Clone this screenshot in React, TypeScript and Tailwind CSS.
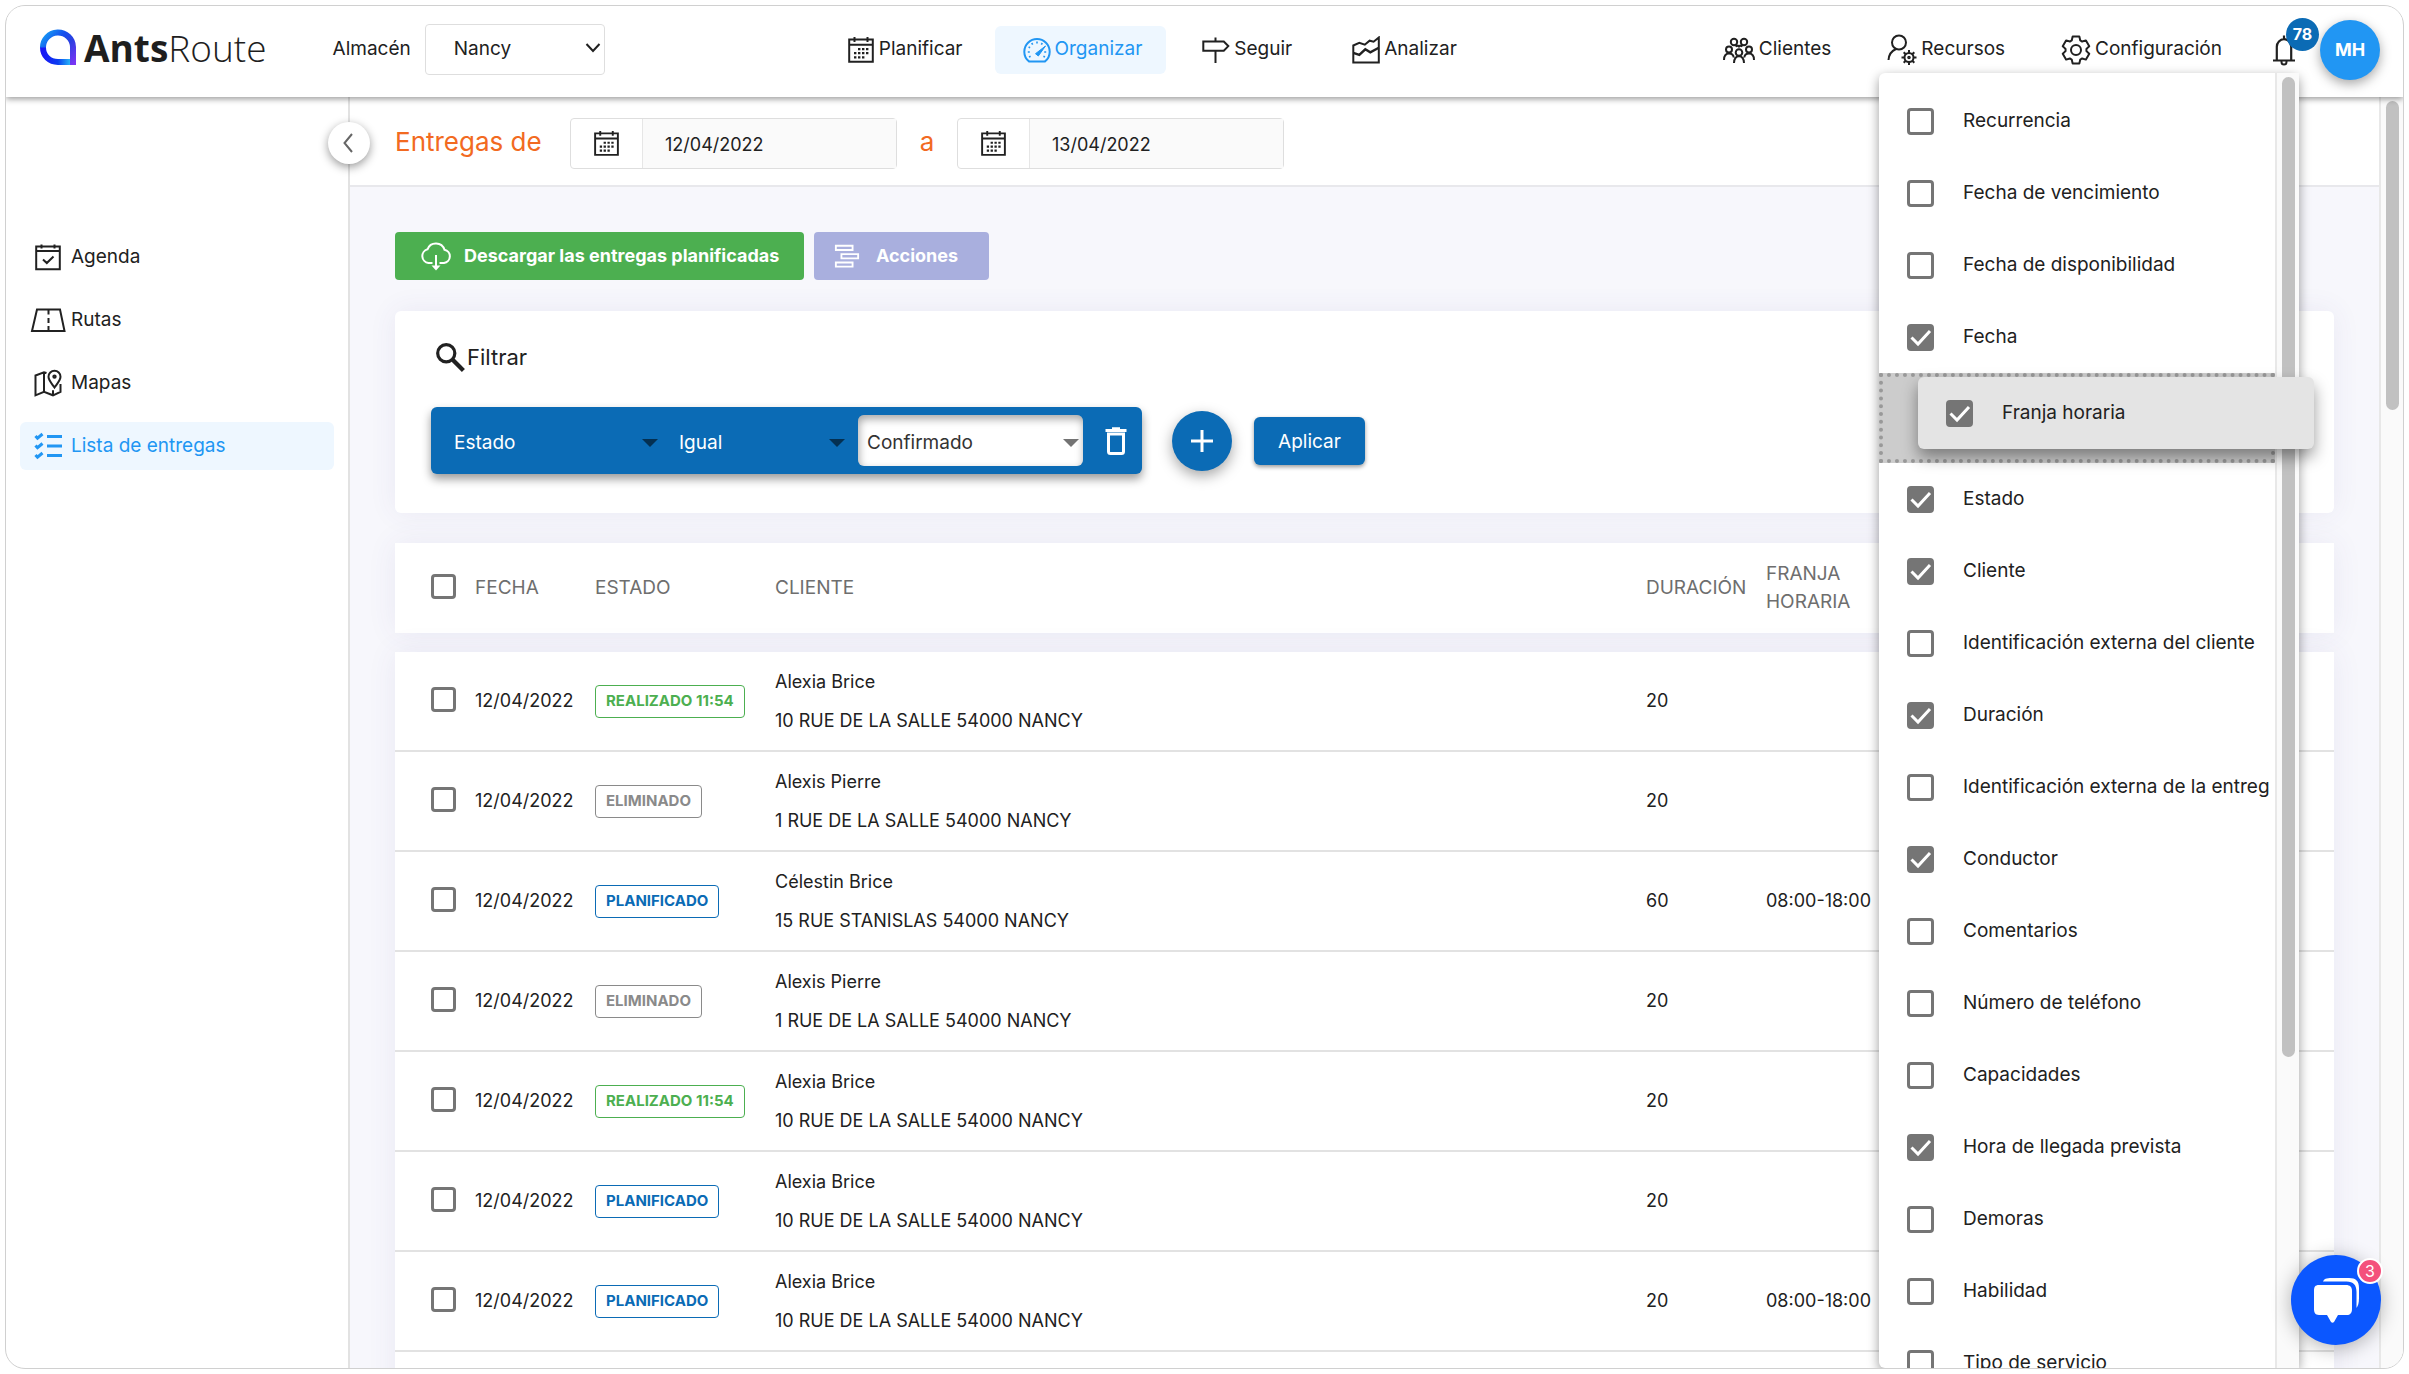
import { useState } from "react";
import type { ReactNode } from "react";

type Status = "done" | "removed" | "planned";

type Delivery = {
  date: string;
  status: Status;
  client: string;
  address: string;
  duration: number;
  slot?: string;
};

const alexia = { client: "Alexia Brice", address: "10 RUE DE LA SALLE 54000 NANCY" };
const alexis = { client: "Alexis Pierre", address: "1 RUE DE LA SALLE 54000 NANCY" };
const celestin = { client: "Célestin Brice", address: "15 RUE STANISLAS 54000 NANCY" };

const deliveries: Delivery[] = [
  { date: "12/04/2022", status: "done", ...alexia, duration: 20 },
  { date: "12/04/2022", status: "removed", ...alexis, duration: 20 },
  { date: "12/04/2022", status: "planned", ...celestin, duration: 60, slot: "08:00-18:00" },
  { date: "12/04/2022", status: "removed", ...alexis, duration: 20 },
  { date: "12/04/2022", status: "done", ...alexia, duration: 20 },
  { date: "12/04/2022", status: "planned", ...alexia, duration: 20 },
  { date: "12/04/2022", status: "planned", ...alexia, duration: 20, slot: "08:00-18:00" },
];

const statusStyles: Record<Status, { label: string; className: string }> = {
  done: { label: "REALIZADO 11:54", className: "border-[#4caf50] text-[#4caf50]" },
  removed: { label: "ELIMINADO", className: "border-[#8a8a8a] text-[#8a8a8a]" },
  planned: { label: "PLANIFICADO", className: "border-[#0b6bb5] text-[#0b6bb5]" },
};

const columnsBefore = [
  { label: "Recurrencia", checked: false },
  { label: "Fecha de vencimiento", checked: false },
  { label: "Fecha de disponibilidad", checked: false },
  { label: "Fecha", checked: true },
];

const columnsAfter = [
  { label: "Estado", checked: true },
  { label: "Cliente", checked: true },
  { label: "Identificación externa del cliente", checked: false },
  { label: "Duración", checked: true },
  { label: "Identificación externa de la entreg", checked: false },
  { label: "Conductor", checked: true },
  { label: "Comentarios", checked: false },
  { label: "Número de teléfono", checked: false },
  { label: "Capacidades", checked: false },
  { label: "Hora de llegada prevista", checked: true },
  { label: "Demoras", checked: false },
  { label: "Habilidad", checked: false },
  { label: "Tipo de servicio", checked: false },
];

const tableGrid = "grid grid-cols-[44px_120px_180px_1fr_120px_568px] items-center pl-9";

function Icon({
  children,
  box = "0 0 28 28",
  className = "size-7",
  width = 2,
}: {
  children: ReactNode;
  box?: string;
  className?: string;
  width?: number;
}) {
  return (
    <svg
      viewBox={box}
      className={`shrink-0 ${className}`}
      fill="none"
      stroke="currentColor"
      strokeWidth={width}
      aria-hidden="true"
    >
      {children}
    </svg>
  );
}

function CalendarIcon({ className = "size-7" }: { className?: string }) {
  return (
    <Icon className={className}>
      <path d="M2.2 3.5h23.6v22.3H2.2zM2.2 8.8h23.6M7.5 1v5M20.5 1v5" />
      <path
        d="M11 13.2h2.4M15 13.2h2.4M19 13.2h2.4M7 17.2h2.4M11 17.2h2.4M15 17.2h2.4M19 17.2h2.4M7 21.4h2.4M11 21.4h2.4M15 21.4h2.4"
        strokeWidth="2.2"
      />
    </Icon>
  );
}

function GaugeIcon() {
  return (
    <Icon>
      <path d="M6 25.4C3 23 1.3 19.500 1.300 15.700a12.700 12.700 0 0 1 25.400 0c0 3.800-1.700 7.300-4.700 9.700z" />
      <path d="M14 5.500v2M8.700 7l1 1.700M19.300 7l-1 1.700M5.600 11l1.500.8M4.800 16h2M23.200 16h-2M6 21l1.600-.8M22 21l-1.600-.8" strokeWidth="1.600" />
      <path d="m12.500 17.700 10-7.700-7.200 10z" fill="currentColor" strokeWidth="1" />
    </Icon>
  );
}

function SignIcon() {
  return (
    <Icon>
      <path d="M1.300 5.500h20.500l4.500 4.600-4.500 4.600H1.300zM13.500 1.500v4M13.500 14.700V27" />
    </Icon>
  );
}

function ChartIcon() {
  return (
    <Icon>
      <path d="M1.300 26.500V9.500l6-2.600 5.500 1.800 4.800-4 4 1 5.200-4.200v25z" />
      <path d="m1.300 16.800 6 2 6-5.500 5 3 8.500-4.600" strokeWidth="2.400" />
    </Icon>
  );
}

function PeopleIcon() {
  return (
    <Icon box="0 0 32 28" className="h-7 w-8">
      <circle cx="11" cy="6" r="3.200" />
      <circle cx="21" cy="6" r="3.200" />
      <circle cx="6" cy="13.500" r="3" />
      <circle cx="26" cy="13.500" r="3" />
      <circle cx="16" cy="16.500" r="3.300" />
      <path d="M1 24c0-4 2-6.500 5-6.500s4.500 2 4.700 4M31 24c0-4-2-6.500-5-6.500s-4.500 2-4.700 4M11 27c.2-4 2-6.700 5-6.700s4.800 2.700 5 6.700M12.500 10.500c1-1 2.300-1.200 3.500 0 1.200-1.200 2.500-1 3.500 0" />
    </Icon>
  );
}

function ResourceIcon() {
  return (
    <Icon box="0 0 30 32" className="h-8 w-[30px]">
      <circle cx="12" cy="8.500" r="7" />
      <path d="M1.500 26c.3-5 3-9 7.500-11" />
      <circle cx="22" cy="23.500" r="4.500" />
      <circle cx="22" cy="23.500" r=".8" />
      <path d="M22 16v3M22 28v3M14.500 23.500h3M26.500 23.500h3M16.700 18.200l2 2M25.300 26.800l2 2M27.300 18.200l-2 2M18.700 26.800l-2 2" />
    </Icon>
  );
}

function GearIcon() {
  const teeth = [0, 60, 120, 180, 240, 300];

  const points = teeth.flatMap((angle) =>
    [
      [-24, 10.5],
      [-14, 13.8],
      [14, 13.8],
      [24, 10.5],
    ].map(([shift, radius]) => {
      const rad = ((angle + shift) * Math.PI) / 180;
      return `${(15 + radius * Math.sin(rad)).toFixed(2)},${(15 - radius * Math.cos(rad)).toFixed(2)}`;
    }),
  );

  return (
    <Icon box="0 0 30 30" className="size-[30px]">
      <polygon points={points.join(" ")} strokeLinejoin="round" />
      <circle cx="15" cy="15" r="5" />
    </Icon>
  );
}

function BellIcon() {
  return (
    <Icon box="0 0 24 32" className="h-8 w-6">
      <path d="M12 1.500v3M1 26.500h22M4.800 26.500V12.700a7.200 7.500 0 0 1 14.400 0v13.800" strokeWidth="2.200" />
      <path d="M9.500 27v1a2.500 2.500 0 0 0 5 0v-1" />
    </Icon>
  );
}

function AgendaIcon() {
  return (
    <Icon>
      <path d="M2.200 3.500h23.600v22.800H2.200zM2.200 8h23.600M7.500 1.500v4M20.500 1.500v4M9 16.500l3.800 3.500 6.700-6.500" />
    </Icon>
  );
}

function RoadIcon() {
  return (
    <Icon box="0 0 36 28" className="h-7 w-9">
      <path d="M7 3.500h23l4.500 21.500H2zM18.500 3.500v5M18.500 12v5M18.500 20v5" />
    </Icon>
  );
}

function MapIcon() {
  return (
    <Icon>
      <path d="M12.500 4 10 3.200 1.500 6.500v19.800l8.500-3.500 9 3.500 7.500-3.500V15M10 3.200v19.600M19 26.300v-5M14.500 7.800a6 6 0 0 1 12 0c0 3.500-3.500 7-6 10.700-2.500-3.700-6-7.200-6-10.700z" />
      <circle cx="20.500" cy="7.600" r="1.200" />
    </Icon>
  );
}

function ChecklistIcon() {
  return (
    <Icon width={3}>
      <path d="m1.500 4 2 2.200L8.500 2M1.500 13.500l2 2.200 5-4.200M1.500 23l2 2.200 5-4.200M13 4.500h15M13 14h15M13 23.500h15" />
    </Icon>
  );
}

function Logo() {
  return (
    <a href="#" className="flex items-center gap-2 text-[37px] text-[#1e1e1e]" aria-label="AntsRoute">
      <svg viewBox="0 0 36 36" className="size-9 self-start" fill="none" strokeWidth="6" aria-hidden="true">
        <defs>
          <linearGradient id="ring" x1="0" y1="0" x2="1" y2="1">
            <stop offset="0" stopColor="#17a3f5" />
            <stop offset=".35" stopColor="#1450ee" />
            <stop offset=".6" stopColor="#2b3fe0" />
            <stop offset="1" stopColor="#7a35f5" />
          </linearGradient>
          <linearGradient id="ring-base" x1="0" y1="0" x2="1" y2="0">
            <stop offset="0" stopColor="#1a17f5" />
            <stop offset=".55" stopColor="#0a3cf0" />
            <stop offset="1" stopColor="#27b4f7" />
          </linearGradient>
        </defs>
        <path d="M33 36V18A15 15 0 1 0 3 19" stroke="url(#ring)" />
        <path d="M3 18.500C3 27 9.500 33 18 33h12" stroke="url(#ring-base)" />
      </svg>
      <span className="pb-1 font-['Open_Sans',sans-serif] leading-none">
        <b className="font-bold">Ants</b>
        <span className="font-light">Route</span>
      </span>
    </a>
  );
}

function Checkbox({
  checked = false,
  label,
  id,
  size = "size-[27px]",
}: {
  checked?: boolean;
  label?: string;
  id?: string;
  size?: string;
}) {
  return (
    <span className={`relative block shrink-0 ${size}`}>
      <input
        id={id}
        type="checkbox"
        defaultChecked={checked}
        aria-label={label}
        className="peer block size-full appearance-none rounded-sm border-[3px] border-[#757575] checked:bg-[#757575]"
      />
      <svg
        viewBox="0 0 27 27"
        className="pointer-events-none absolute inset-0 hidden size-full peer-checked:block"
        fill="none"
        stroke="white"
        strokeWidth="3"
        aria-hidden="true"
      >
        <path d="m4.500 13.500 6.500 6.500L23 7" />
      </svg>
    </span>
  );
}

function NavItem({ icon, label, active }: { icon: ReactNode; label: string; active?: boolean }) {
  return (
    <a
      href="#"
      className={
        active
          ? "flex h-12 items-center gap-1 rounded-md bg-[#eef7ff] pr-6 pl-7 text-[#2196f3]"
          : "flex h-12 items-center gap-1 rounded-md pr-6 pl-7"
      }
    >
      {icon}
      {label}
    </a>
  );
}

function SideItem({ icon, label, active }: { icon: ReactNode; label: string; active?: boolean }) {
  return (
    <a
      href="#"
      className={
        active
          ? "flex h-12 items-center gap-[3px] rounded-md bg-[#eef7ff] pl-2 text-[#2196f3]"
          : "flex h-12 items-center gap-[3px] rounded-md pl-2"
      }
    >
      <span className="flex w-10 justify-center">{icon}</span>
      {label}
    </a>
  );
}

function DateField({ label, value }: { label: string; value: string }) {
  const [date, setDate] = useState(value);

  return (
    <div className="flex h-[51px] w-[327px] rounded-sm border border-[#dedede]">
      <button type="button" aria-label={`Abrir calendario ${label}`} className="flex w-[71px] items-center justify-center">
        <CalendarIcon className="size-[27px]" />
      </button>
      <input
        type="text"
        aria-label={label}
        value={date}
        onChange={(e) => setDate(e.target.value)}
        className="min-w-0 flex-1 border-l border-[#e6e6e6] bg-[#fafafa] pt-1 pl-[22px] text-lg"
      />
    </div>
  );
}

function FilterSelect({ label, value, className }: { label: string; value: string; className: string }) {
  return (
    <span className={`relative block ${className}`}>
      <select aria-label={label} className="size-full appearance-none bg-transparent pt-[6px] pl-[9px]">
        <option>{value}</option>
      </select>
      <svg viewBox="0 0 16 8" className="pointer-events-none absolute top-6 right-1 h-2 w-4 fill-black/55" aria-hidden="true">
        <path d="M0 0h16L8 8z" />
      </svg>
    </span>
  );
}

function ColumnRow({ label, checked }: { label: string; checked: boolean }) {
  return (
    <li>
      <label className="flex h-[72px] items-center gap-[29px] overflow-hidden pl-7 whitespace-nowrap">
        <Checkbox checked={checked} />
        {label}
      </label>
    </li>
  );
}

function ColumnMenu() {
  return (
    <div className="absolute top-[67px] right-[104px] bottom-0 z-20 flex w-[420px] rounded-md bg-white shadow-[0_4px_12px_rgba(0,0,0,0.4)]">
      <div className="min-w-0 flex-1 pt-3">
        <ul>
          {columnsBefore.map((column) => (
            <ColumnRow key={column.label} {...column} />
          ))}
          <li className="relative h-[90px] border-4 border-dotted border-[#999] bg-[#ccc]">
            <label className="absolute top-0 left-[35px] flex h-[72px] w-[396px] items-center gap-[29px] rounded-md bg-[#e4e4e4] pl-7 shadow-[0_8px_16px_rgba(0,0,0,0.4)]">
              <Checkbox checked />
              Franja horaria
            </label>
          </li>
          {columnsAfter.map((column) => (
            <ColumnRow key={column.label} {...column} />
          ))}
        </ul>
      </div>
      <div className="-z-10 w-6 border-l-2 border-[#e8e8e8] bg-[#fafafa] pt-1">
        <div className="mx-auto h-[980px] w-[13px] rounded-full bg-[#c1c1c1]" />
      </div>
    </div>
  );
}

function Header() {
  return (
    <header className="relative z-10 flex h-[91px] shrink-0 items-center bg-white pr-[23px] pb-1 pl-[34px] shadow-[0_2px_6px_rgba(0,0,0,0.4)]">
      <Logo />
      <div className="ml-[66px] flex items-center gap-[14px]">
        <label htmlFor="depot">Almacén</label>
        <span className="relative block">
          <select id="depot" className="h-[51px] w-[180px] appearance-none rounded-sm border border-[#dedede] bg-white pl-7">
            <option>Nancy</option>
          </select>
          <Icon box="0 0 16 16" className="pointer-events-none absolute top-4 right-1 size-4">
            <path d="m1.500 4 6.500 7 6.500-7" />
          </Icon>
        </span>
      </div>
      <nav className="mx-auto flex gap-2">
        <NavItem icon={<CalendarIcon />} label="Planificar" />
        <NavItem icon={<GaugeIcon />} label="Organizar" active />
        <NavItem icon={<SignIcon />} label="Seguir" />
        <NavItem icon={<ChartIcon />} label="Analizar" />
      </nav>
      <nav className="flex gap-1">
        <NavItem icon={<PeopleIcon />} label="Clientes" />
        <NavItem icon={<ResourceIcon />} label="Recursos" />
        <NavItem icon={<GearIcon />} label="Configuración" />
      </nav>
      <button type="button" aria-label="Notificaciones" className="relative ml-[26px]">
        <BellIcon />
        <span className="absolute -top-4 left-[14px] flex size-[33px] items-center justify-center rounded-full bg-[#0b6bb5] text-base font-bold text-white">
          78
        </span>
      </button>
      <button
        type="button"
        className="ml-6 size-[60px] rounded-full bg-[#2196f3] text-lg font-bold text-white shadow-[0_4px_12px_rgba(0,0,0,0.35)]"
      >
        MH
      </button>
    </header>
  );
}

function DeliveryTable() {
  return (
    <table className="mt-[30px] block text-left text-lg">
      <thead className="block bg-white text-[19px] text-[#6e6e6e] shadow-[0_0_28px_rgba(80,60,140,0.08)]">
        <tr className={`h-[90px] ${tableGrid}`}>
          <th className="pb-1">
            <Checkbox label="Seleccionar todo" size="size-[25px]" />
          </th>
          <th className="font-normal">FECHA</th>
          <th className="font-normal">ESTADO</th>
          <th className="font-normal">CLIENTE</th>
          <th className="font-normal">DURACIÓN</th>
          <th className="w-24 leading-7 font-normal">FRANJA HORARIA</th>
        </tr>
      </thead>
      <tbody className="mt-[19px] block bg-white shadow-[0_0_28px_rgba(80,60,140,0.08)]">
        {deliveries.map((delivery, index) => {
          const status = statusStyles[delivery.status];

          return (
            <tr key={index} className={`h-[100px] border-b-2 border-[#e2e2e2] ${tableGrid}`}>
              <td className="pb-1">
                <Checkbox label={`Seleccionar ${delivery.client}`} size="size-[25px]" />
              </td>
              <td>{delivery.date}</td>
              <td>
                <span
                  className={`inline-flex h-[33px] items-center rounded-sm border px-[10px] text-[15px] font-bold ${status.className}`}
                >
                  {status.label}
                </span>
              </td>
              <td className="leading-[39px]">
                <div>{delivery.client}</div>
                <div>{delivery.address}</div>
              </td>
              <td>{delivery.duration}</td>
              <td>{delivery.slot}</td>
            </tr>
          );
        })}
        <tr className="block h-20">
          <td />
        </tr>
      </tbody>
    </table>
  );
}

export default function App() {
  return (
    <div className="h-screen bg-white p-[5px] font-['Inter',sans-serif] text-[19px] text-[#212121]">
      <div className="relative flex h-full flex-col overflow-hidden rounded-[20px] border border-[#d0d0d0] bg-white">
        <Header />

        <div className="flex min-h-0 flex-1">
          <aside className="relative w-[344px] shrink-0 border-r-2 border-[#e2e2e2] px-[14px] pt-[136px]">
            <nav className="flex flex-col gap-[15px]">
              <SideItem icon={<AgendaIcon />} label="Agenda" />
              <SideItem icon={<RoadIcon />} label="Rutas" />
              <SideItem icon={<MapIcon />} label="Mapas" />
              <SideItem icon={<ChecklistIcon />} label="Lista de entregas" active />
            </nav>
            <button
              type="button"
              aria-label="Contraer menú"
              className="absolute top-[25px] -right-[22px] z-10 flex size-[42px] items-center justify-center rounded-full bg-white text-[#666] shadow-[0_3px_10px_rgba(0,0,0,0.4)]"
            >
              <Icon box="0 0 20 20" className="size-5">
                <path d="M13 1 5.500 10l7.500 9" />
              </Icon>
            </button>
          </aside>

          <main className="min-w-0 flex-1 overflow-hidden bg-[#f7f7fc]">
            <div className="flex h-[90px] items-center border-b-2 border-[#e8e8ec] bg-white pt-1 pl-[45px]">
              <h1 className="w-[175px] pb-1 text-[26px] text-[#f26a21]">Entregas de</h1>
              <DateField label="Fecha inicial" value="12/04/2022" />
              <span className="w-[60px] pb-1 text-center text-[26px] text-[#f26a21]">a</span>
              <DateField label="Fecha final" value="13/04/2022" />
            </div>

            <div className="px-[45px] pt-[45px]">
              <div className="flex gap-[10px] text-lg font-bold text-white">
                <button type="button" className="flex h-12 w-[409px] items-center gap-3 rounded-sm bg-[#4caf50] pl-[25px]">
                  <Icon box="0 0 32 30" className="h-[30px] w-8">
                    <path d="M12.500 22H8.500a7 7 0 0 1-1-13.700 9 9 0 0 1 17 .5A6.700 6.700 0 0 1 24 22h-4.500M16 14v13" />
                    <path d="m11.500 24.500 4.500 5 4.500-5z" fill="currentColor" stroke="none" />
                  </Icon>
                  Descargar las entregas planificadas
                </button>
                <button type="button" className="flex h-12 w-[175px] items-center gap-4 rounded-sm bg-[#a9afde] pl-5">
                  <Icon className="size-[26px]" width={2}>
                    <path d="M2 3h18v4.500H2zM8 12h18v4.500H8zM2 21h18v4.500H2z" />
                  </Icon>
                  Acciones
                </button>
              </div>

              <section className="mt-[31px] h-[202px] rounded-md bg-white pt-7 pl-9 shadow-[0_0_28px_rgba(80,60,140,0.08)]">
                <h2 className="flex h-9 items-center gap-[2px] text-[22px]">
                  <Icon className="ml-1 size-[30px]" width={3}>
                    <circle cx="10.500" cy="10.500" r="8" />
                    <path d="m16.500 16.500 10 10" strokeWidth="4" />
                  </Icon>
                  Filtrar
                </h2>
                <div className="mt-8 flex items-center">
                  <div className="flex h-[67px] w-[711px] items-center rounded-md bg-[#0b6bb5] pl-[14px] text-white shadow-[0_5px_10px_rgba(0,0,0,0.4)]">
                    <FilterSelect label="Campo" value="Estado" className="h-[51px] w-[217px]" />
                    <FilterSelect label="Operador" value="Igual" className="ml-2 h-[51px] w-[179px]" />
                    <FilterSelect
                      label="Valor"
                      value="Confirmado"
                      className="ml-[9px] h-[51px] w-[225px] rounded-md bg-white text-[#333] shadow-[inset_1px_4px_8px_rgba(0,0,0,0.35)]"
                    />
                    <button type="button" aria-label="Eliminar filtro" className="ml-[22px]">
                      <Icon box="0 0 22 28" className="h-7 w-[22px]" width={3}>
                        <path d="M3.500 7h15v17.500a2 2 0 0 1-2 2h-11a2 2 0 0 1-2-2z" />
                        <path d="M.5 3.500h21M7 1.700h8" />
                      </Icon>
                    </button>
                  </div>
                  <button
                    type="button"
                    aria-label="Añadir filtro"
                    className="ml-[30px] flex size-[60px] items-center justify-center rounded-full bg-[#0b6bb5] text-white shadow-[0_5px_14px_rgba(0,0,0,0.35)]"
                  >
                    <Icon box="0 0 22 22" className="size-[22px]" width={3}>
                      <path d="M11 0v22M0 11h22" />
                    </Icon>
                  </button>
                  <button
                    type="button"
                    className="ml-[22px] h-12 w-[111px] rounded-md bg-[#0b6bb5] pt-1 text-white shadow-[0_2px_4px_rgba(0,0,0,0.4)]"
                  >
                    Aplicar
                  </button>
                </div>
              </section>

              <DeliveryTable />
            </div>
          </main>

          <div className="w-6 shrink-0 border-l-2 border-[#e8e8e8] bg-[#fafafa] pt-1">
            <div className="mx-auto h-[309px] w-[13px] rounded-full bg-[#c1c1c1]" />
          </div>
        </div>

        <ColumnMenu />

        <button
          type="button"
          aria-label="Abrir chat"
          className="absolute right-[22px] bottom-[23px] z-30 flex size-[90px] items-center justify-center rounded-full bg-[#0b57ff] shadow-[0_3px_20px_rgba(0,0,0,0.3)]"
        >
          <svg viewBox="0 0 48 48" className="size-12 fill-white" aria-hidden="true">
            <path d="M7 9h27c4 0 6 2 6 6v18c0 4-2 6-5 6h-9l-4 7c-1 1-2 1-3 0l-4-7H7c-4 0-5-3-5-6V15c0-4 1-6 5-6z" />
            <path d="M11 5.500C12 3 14 2 20 2h17c7 0 10 3 10 10v10c0 5-1 8-2.500 10V16c0-7-3-10.500-10-10.500z" />
          </svg>
          <span className="absolute top-[3px] -right-[2px] flex size-[26px] items-center justify-center rounded-full border-2 border-white bg-[#f4517c] text-base leading-none text-white">
            3
          </span>
        </button>
      </div>
    </div>
  );
}
